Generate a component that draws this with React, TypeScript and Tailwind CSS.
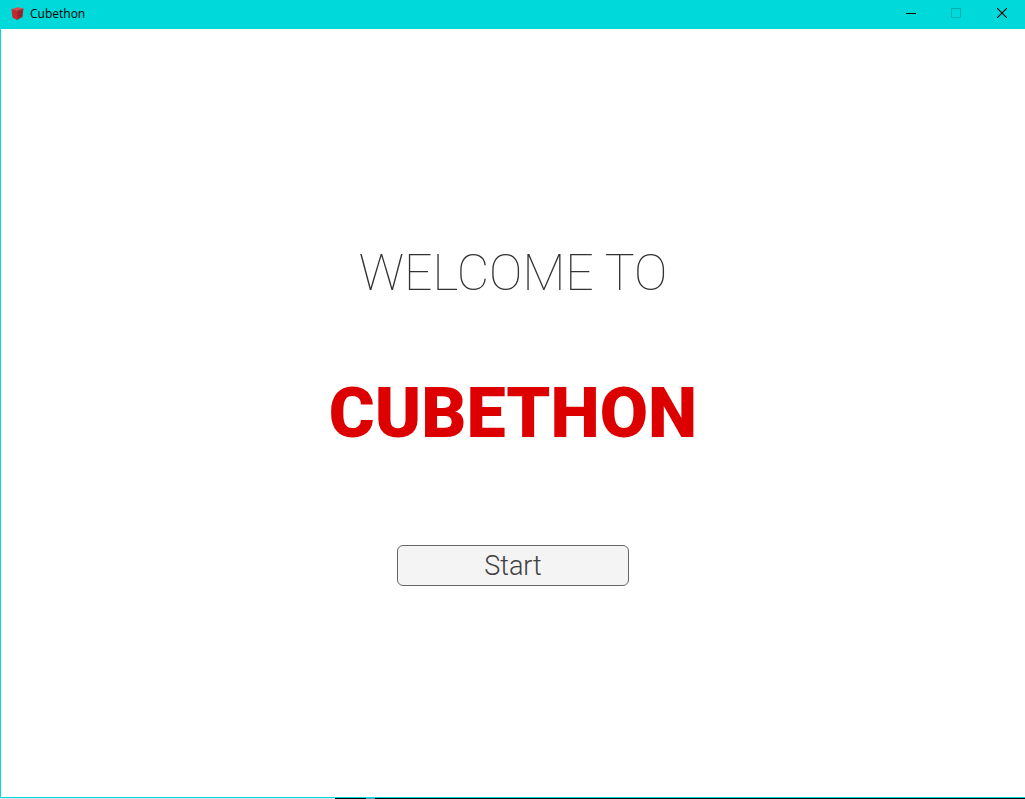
function CubeIcon() {
  return (
    <svg width="13" height="13" viewBox="0 0 13 13" aria-hidden="true">
      <path d="M.5 2 7 .300l5.500 1.200L6 3.500Z" fill="#e2484a" />
      <path d="M.5 2 6 3.500V13L1.500 10.500Z" fill="#c9262c" />
      <path d="M6 3.500 12.500 1.500 11.500 10 6 13Z" fill="#a3262d" />
      <path d="m7 6 4-1M7 9l4-1.500" stroke="#74242b" strokeWidth="1" />
    </svg>
  );
}

function WindowControls() {
  const control = "flex h-full w-[46px] items-center justify-center";
  return (
    <div className="flex self-stretch">
      <button type="button" aria-label="Minimize" className={control}>
        <svg width="12" height="10" viewBox="0 0 12 10" shapeRendering="crispEdges">
          <path d="M2 5h10v1H2Z" fill="#000" />
        </svg>
      </button>
      <button type="button" aria-label="Maximize" disabled className={control}>
        <svg width="10" height="10" viewBox="0 0 10 10" fill="none">
          <path d="M.5.5h9v9h-9Z" stroke="#00adad" />
        </svg>
      </button>
      <button type="button" aria-label="Close" className={control}>
        <svg width="10" height="10" viewBox="0 0 10 10" fill="none">
          <path d="m0 0 10 10M10 0 0 10" stroke="#000" strokeWidth="1.1" />
        </svg>
      </button>
    </div>
  );
}

export default function App() {
  return (
    <div className="flex min-h-screen flex-col bg-white font-['Roboto',sans-serif]">
      <header className="flex h-[29px] shrink-0 items-center bg-[#00d9da] pb-[3px] pl-[11px] text-xs text-black">
        <CubeIcon />
        <h1 className="ml-1.5 grow pt-0.5 font-['Open_Sans',sans-serif]">Cubethon</h1>
        <WindowControls />
      </header>
      <main className="flex grow flex-col items-center border-b border-l border-[#00d9da] pt-[214px]">
        <p className="text-[50px] leading-[60px] font-thin text-[#323232]">WELCOME TO</p>
        <h2 className="mt-[68px] text-[70px] leading-[84px] font-black text-[#dd0000]">CUBETHON</h2>
        <button type="button" className="mt-[90px] h-[41px] w-[232px] rounded-md border border-[#666] bg-[#f4f4f4] pt-0.5 text-[27px] leading-none font-light text-[#404040]">
          Start
        </button>
      </main>
      <div className="flex h-px">
        <div className="w-[335px] bg-[#dce3e3]" />
        <div className="w-[31px] bg-black" />
        <div className="w-[9px] bg-[#4e9fb5]" />
        <div className="grow bg-black" />
      </div>
    </div>
  );
}
